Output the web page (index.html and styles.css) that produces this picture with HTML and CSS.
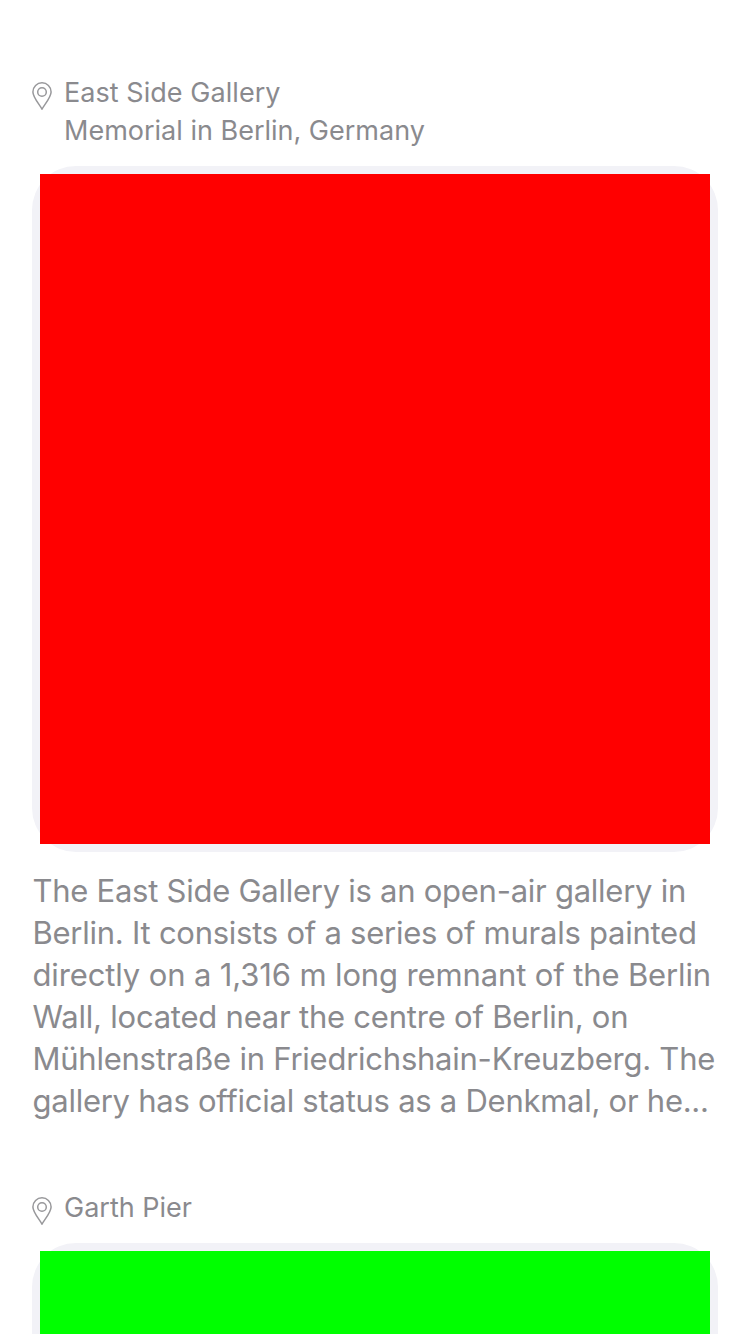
FILE: index.html
```html
<!DOCTYPE html>
<html lang="en">
<head>
<meta charset="utf-8">
<title>Places</title>
<link rel="stylesheet" href="styles.css">
</head>
<body>
<main class="feed">
  <article class="place">
    <header class="place-header">
      <svg class="pin" viewBox="0 0 20 29" aria-hidden="true"><path d="M10 27.2C8.3 23.6 .9 15.3 .9 9.9a9.1 9.1 0 0 1 18.2 0C19.1 15.3 11.7 23.6 10 27.2Z"/><circle cx="10" cy="10" r="4.3"/></svg>
      <h2 class="place-title"><span class="line t1">East Side Gallery</span><span class="line t2">Memorial in Berlin, Germany</span></h2>
    </header>
    <div class="frame"><div class="photo red"></div></div>
    <p class="description"><span class="line d1">The East Side Gallery is an open-air gallery in</span><span class="line d2">Berlin. It consists of a series of murals painted</span><span class="line d3">directly on a 1,316 m long remnant of the Berlin</span><span class="line d4">Wall, located near the centre of Berlin, on</span><span class="line d5">Mühlenstraße in Friedrichshain-Kreuzberg. The</span><span class="line d6">gallery has official status as a Denkmal, or he...</span></p>
  </article>
  <article class="place">
    <header class="place-header">
      <svg class="pin" viewBox="0 0 20 29" aria-hidden="true"><path d="M10 27.2C8.3 23.6 .9 15.3 .9 9.9a9.1 9.1 0 0 1 18.2 0C19.1 15.3 11.7 23.6 10 27.2Z"/><circle cx="10" cy="10" r="4.3"/></svg>
      <h2 class="place-title"><span class="line t3">Garth Pier</span></h2>
    </header>
    <div class="frame"><div class="photo green"></div></div>
  </article>
</main>
</body>
</html>
```
FILE: styles.css
```css
* { box-sizing: border-box; }
body { margin: 0; background: #fff; color: #8a8a8e; font-family: Inter, "Liberation Sans", sans-serif; }
.feed { height: 1334px; overflow: hidden; padding: 74px 32px 0; display: flex; flex-direction: column; gap: 67px; }
.place { flex: none; }
.place-header { display: flex; gap: 12px; }
.pin { width: 20px; height: 29px; margin-top: 8px; flex: none; fill: none; stroke: #98989b; stroke-width: 1.5; stroke-linejoin: round; }
.place-title { margin: 0; font-size: 27px; font-weight: 400; line-height: 38px; }
.t1 { letter-spacing: 0.05px; }
.line { display: block; white-space: nowrap; }
.frame { width: 686px; height: 686px; margin-top: 16px; padding: 8px; border-radius: 44px; background: #f2f2f7; }
.photo { height: 670px; }
.red { background: #f00; }
.green { background: #0f0; }
.description { margin: 18px 0 0; padding-left: 0.5px; font-size: 31px; line-height: 42px; }
.d1 { letter-spacing: -0.26px; }
.d2 { letter-spacing: -0.25px; }
.d3 { letter-spacing: -0.13px; }
.d4 { letter-spacing: -0.22px; }
.d5 { letter-spacing: -0.24px; }
.d6 { letter-spacing: -0.26px; }
```
